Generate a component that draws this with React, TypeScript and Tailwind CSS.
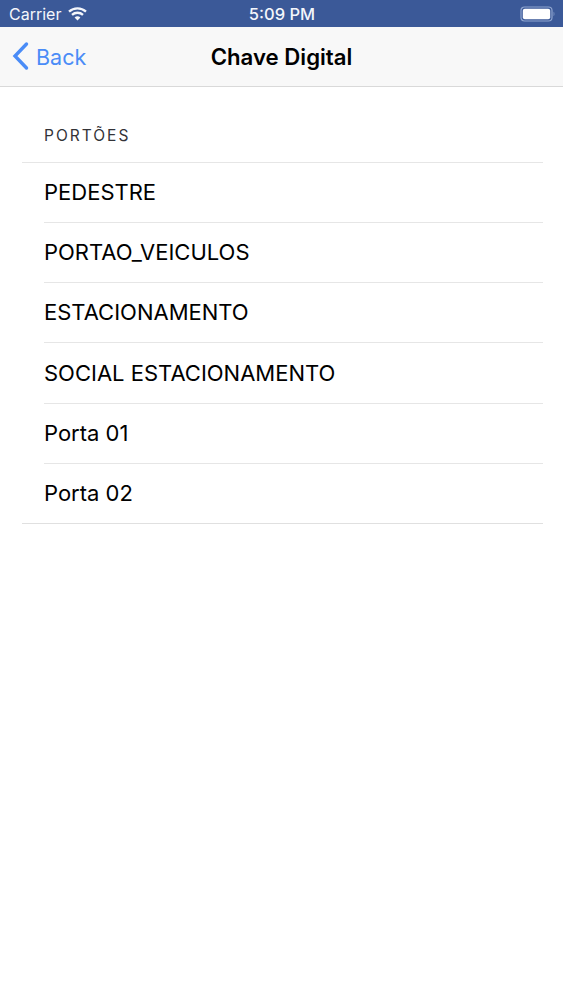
const GATES = [
  "PEDESTRE",
  "PORTAO_VEICULOS",
  "ESTACIONAMENTO",
  "SOCIAL ESTACIONAMENTO",
  "Porta 01",
  "Porta 02",
];

function WifiIcon() {
  return (
    <svg width="19" height="14" viewBox="0 0 19 14" fill="none" className="ml-[7px]">
      <path d="M1 4.6C5.8 .2 13.2 .2 18 4.6" stroke="#f4f6fb" strokeWidth="2.3" />
      <path d="M4 7.9C7.1 5 11.9 5 15 7.9" stroke="#f4f6fb" strokeWidth="2.3" />
      <path d="M6.6 10.4C8.4 9 10.6 9 12.4 10.4L9.5 13.6Z" fill="#f4f6fb" />
    </svg>
  );
}

function BatteryIcon() {
  return (
    <svg width="35" height="16" viewBox="0 0 35 16" fill="none">
      <rect x="1" y="1" width="31" height="14" rx="3.5" stroke="#8fa5cf" strokeWidth="1.2" />
      <rect x="2.8" y="2.8" width="27.4" height="10.4" rx="2" fill="#ffffff" />
      <path d="M33.6 5.8C34.6 6.2 34.6 9.8 33.6 10.2Z" fill="#8fa5cf" />
    </svg>
  );
}

export default function App() {
  return (
    <div className="min-h-[1000px] bg-white font-['Inter',sans-serif] text-black">
      <div className="grid h-[27px] grid-cols-3 items-center bg-[#3b5998] pl-[9px] pr-[8px] pt-[1px] text-[#f4f6fb]">
        <div className="flex items-center text-[16px]">
          <span>Carrier</span>
          <WifiIcon />
        </div>
        <div className="text-center text-[16.5px] font-medium">5:09 PM</div>
        <div className="mt-[-1px] flex justify-end">
          <BatteryIcon />
        </div>
      </div>

      <div className="relative flex h-[60px] items-center justify-center border-b border-[#d9d9d9] bg-[#f8f8f8]">
        <div className="absolute left-[11px] top-[14px] flex items-center text-[#4a8cf7]">
          <svg width="18" height="30" viewBox="0 0 18 30" fill="none">
            <path d="M15.5 3L4 15L15.5 27" stroke="#4a8cf7" strokeWidth="3.4" strokeLinecap="round" />
          </svg>
          <span className="ml-[7px] mt-[2px] text-[21.5px] leading-[28px]">Back</span>
        </div>
        <h1 className="text-[22.2px] font-semibold">Chave Digital</h1>
      </div>

      <div className="pl-[22px] pr-[20px]">
        <div className="h-[75px] pl-[22px] pt-[39px] text-[15.5px] leading-[20px] tracking-[2px] text-[#333338]">
          PORTÕES
        </div>
        <ul className="border-t border-[#e6e6e6]">
          {GATES.map((gate, i) => (
            <li key={gate} className={i === GATES.length - 1 ? "border-b border-[#e0e0e0]" : ""}>
              <div className="flex h-[59.17px] items-center pl-[22px] text-[22px]">
                {gate}
              </div>
              {i < GATES.length - 1 && <div className="ml-[22px] h-px bg-[#e6e6e6]" />}
            </li>
          ))}
        </ul>
      </div>
    </div>
  );
}
